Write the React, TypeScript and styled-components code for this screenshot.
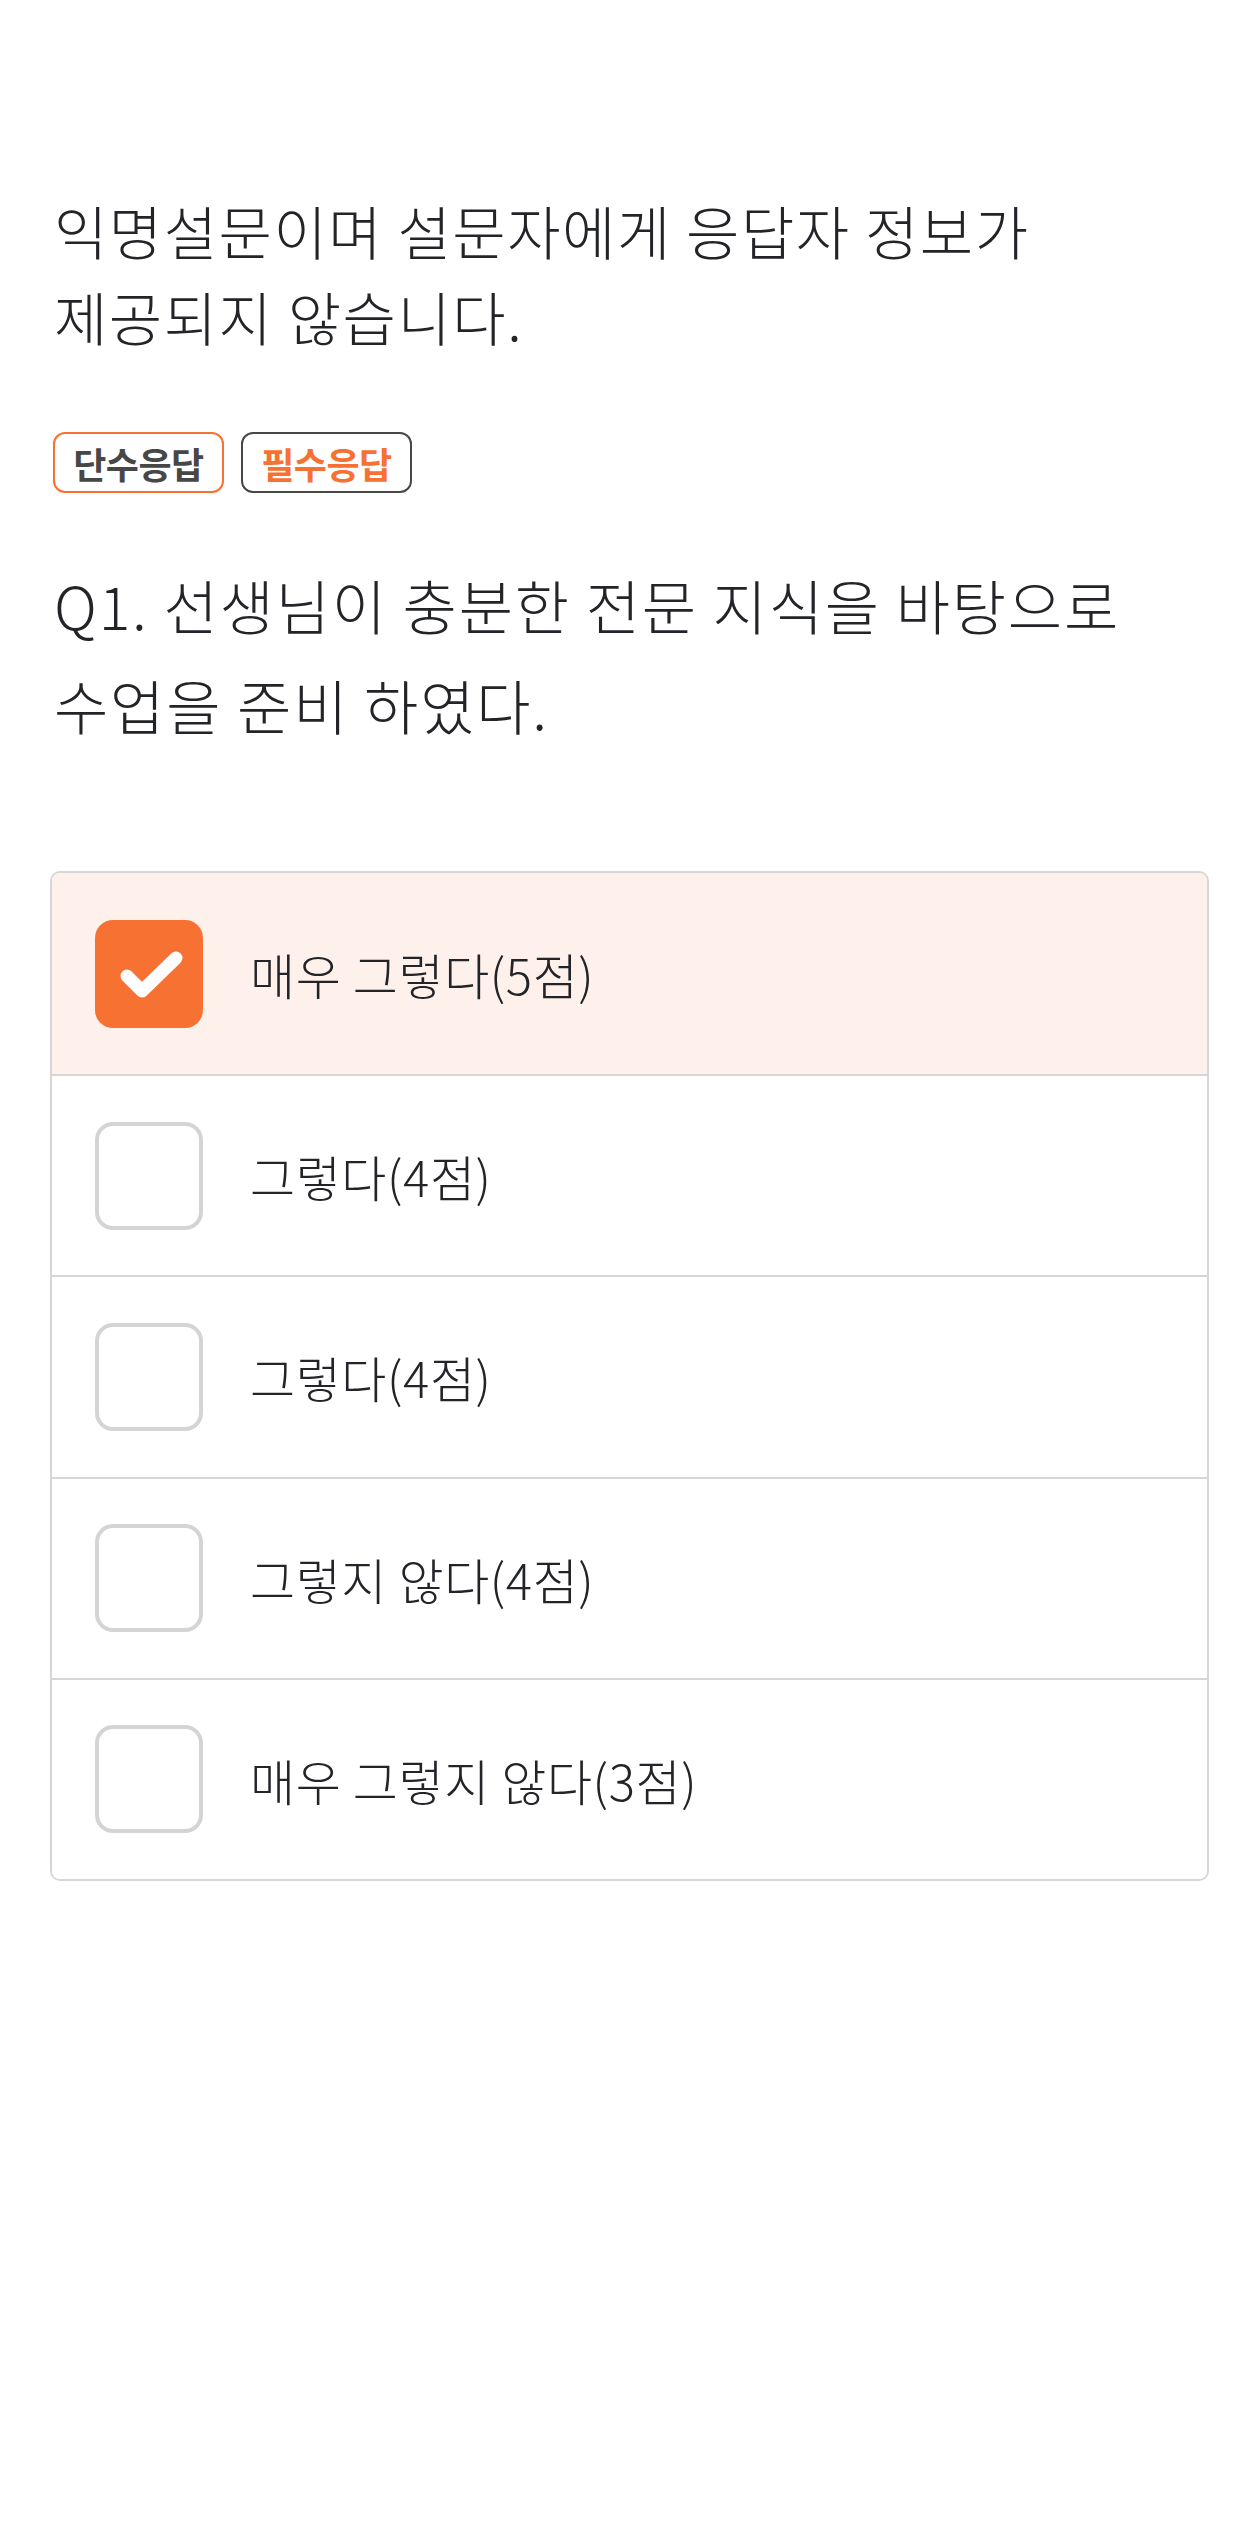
import React from "react";
import styled, { createGlobalStyle } from "styled-components";

const GlobalStyle = createGlobalStyle`
  html, body { margin: 0; padding: 0; background: #ffffff; }
  body {
    font-family: "Noto Sans CJK KR", "Noto Sans", sans-serif;
    color: #222428;
    -webkit-font-smoothing: antialiased;
  }
  * { box-sizing: border-box; }
`;

const Page = styled.main`
  width: 1259px;
  min-height: 2539px;
  padding: 187px 50px 0;
  display: flex;
  flex-direction: column;
`;

const Notice = styled.p`
  margin: 0 0 0 4px;
  font-size: 58px;
  line-height: 86px;
  font-weight: 300;
  letter-spacing: 1.5px;
  color: #222428;
`;

const TagRow = styled.div`
  display: flex;
  gap: 17px;
  margin-top: 73px;
  padding-left: 3px;
`;

const Tag = styled.span<{ $border: string; $color: string }>`
  display: inline-flex;
  align-items: center;
  justify-content: center;
  height: 61px;
  width: 171px;
  border: 2px solid ${(p) => p.$border};
  border-radius: 12px;
  font-size: 36px;
  font-weight: 700;
  letter-spacing: -0.5px;
  color: ${(p) => p.$color};
`;

const Question = styled.h2`
  margin: 62px 0 0 4px;
  font-size: 59px;
  line-height: 100px;
  font-weight: 300;
  letter-spacing: 1.8px;
  color: #222428;
`;

const OptionList = styled.ul`
  list-style: none;
  margin: 116px 0 0;
  padding: 0;
  border: 2px solid #d6d6d6;
  border-radius: 10px;
  overflow: hidden;
`;

const Option = styled.li<{ $checked: boolean }>`
  display: flex;
  align-items: center;
  height: 201.2px;
  padding-left: 43px;
  gap: 47px;
  background: ${(p) => (p.$checked ? "#fef0eb" : "#ffffff")};
  & + & { border-top: 2px solid #d6d6d6; }
`;

const Box = styled.span<{ $checked: boolean }>`
  flex: 0 0 auto;
  width: 108px;
  height: 108px;
  border-radius: 18px;
  display: flex;
  align-items: center;
  justify-content: center;
  background: ${(p) => (p.$checked ? "#f77132" : "#ffffff")};
  border: ${(p) => (p.$checked ? "none" : "4px solid #d4d4d4")};
`;

const Label = styled.span`
  font-size: 49px;
  line-height: 1;
  font-weight: 300;
  letter-spacing: 0.6px;
  color: #222428;
`;

const Check = () => (
  <svg width="108" height="108" viewBox="0 0 108 108" aria-hidden>
    <polyline
      points="32,56 47,71 81,38"
      fill="none"
      stroke="#ffffff"
      strokeWidth="13"
      strokeLinecap="round"
      strokeLinejoin="round"
    />
  </svg>
);

const options = [
  { label: "매우 그렇다(5점)", checked: true },
  { label: "그렇다(4점)", checked: false },
  { label: "그렇다(4점)", checked: false },
  { label: "그렇지 않다(4점)", checked: false },
  { label: "매우 그렇지 않다(3점)", checked: false },
];

export default function App() {
  return (
    <>
      <GlobalStyle />
      <Page>
        <Notice>
          익명설문이며 설문자에게 응답자 정보가
          <br />
          제공되지 않습니다.
        </Notice>
        <TagRow>
          <Tag $border="#f77132" $color="#474747">단수응답</Tag>
          <Tag $border="#474747" $color="#f77132">필수응답</Tag>
        </TagRow>
        <Question>
          Q1. 선생님이 충분한 전문 지식을 바탕으로
          <br />
          수업을 준비 하였다.
        </Question>
        <OptionList>
          {options.map((o, i) => (
            <Option key={i} $checked={o.checked}>
              <Box $checked={o.checked}>{o.checked && <Check />}</Box>
              <Label>{o.label}</Label>
            </Option>
          ))}
        </OptionList>
      </Page>
    </>
  );
}
